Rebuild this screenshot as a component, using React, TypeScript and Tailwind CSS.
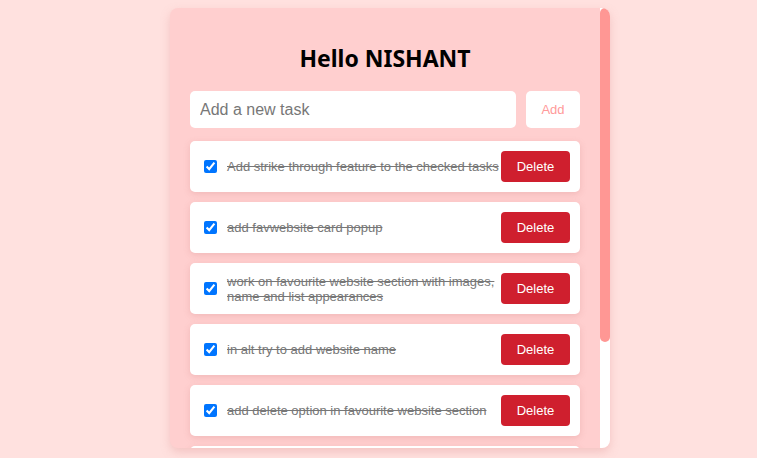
import React from 'react';

type Task = {
  id: number;
  text: string;
  done: boolean;
};

const TASKS: Task[] = [
  { id: 1, text: 'Add strike through feature to the checked tasks', done: true },
  { id: 2, text: 'add favwebsite card popup', done: true },
  {
    id: 3,
    text: 'work on favourite website section with images, name and list appearances',
    done: true,
  },
  { id: 4, text: 'in alt try to add website name', done: true },
  { id: 5, text: 'add delete option in favourite website section', done: true },
  { id: 6, text: 'make the list look better on small screens', done: false },
];

const TaskItem = ({ task }: { task: Task }) => (
  <li className="flex items-center bg-white rounded-[5px] h-[51px] shrink-0 pl-[14px] pr-[10px] shadow-[0_2px_6px_rgba(200,120,120,0.25)]">
    <input
      type="checkbox"
      checked={task.done}
      readOnly
      className="w-[13px] h-[13px] shrink-0 accent-[#0075ff]"
    />
    <span
      className={`flex-1 ml-[10px] text-[13px] leading-[15px] text-[#777] ${
        task.done ? 'line-through' : ''
      }`}>
      {task.text}
    </span>
    <button className="shrink-0 w-[69px] h-[31px] rounded-[4px] bg-[#cf1f2e] text-white text-[13px]">
      Delete
    </button>
  </li>
);

export default function App() {
  return (
    <div className="min-h-screen bg-[#ffe1df] pt-2 pl-[23px] flex justify-center items-start font-['Liberation_Sans',Arial,sans-serif]">
      <div className="flex w-[440px] h-[440px] overflow-hidden rounded-lg bg-[#ffcfcf] shadow-[0_4px_10px_rgba(220,140,140,0.35)]">
        <div className="flex-1 overflow-hidden px-5 pt-[35px]">
          <h1 className="text-center text-[23px] leading-[30px] font-bold text-black font-['Noto_Sans',sans-serif]">
            Hello NISHANT
          </h1>
          <div className="flex gap-[10px] mt-[18px]">
            <input
              type="text"
              placeholder="Add a new task"
              className="flex-1 min-w-0 h-[37px] rounded-[5px] bg-white px-[10px] text-[16px] placeholder:text-[#777] outline-none"
            />
            <button className="w-[54px] h-[37px] rounded-[5px] bg-white text-[13px] text-[#ff9a9a]">
              Add
            </button>
          </div>
          <ul className="flex flex-col gap-[10px] mt-[13px]">
            {TASKS.map((task) => (
              <TaskItem key={task.id} task={task} />
            ))}
          </ul>
        </div>
        {/* scrollbar */}
        <div className="w-[10px] shrink-0 bg-white flex flex-col">
          <div className="h-[334px] rounded-full bg-[#ff9794]" />
        </div>
      </div>
    </div>
  );
}
